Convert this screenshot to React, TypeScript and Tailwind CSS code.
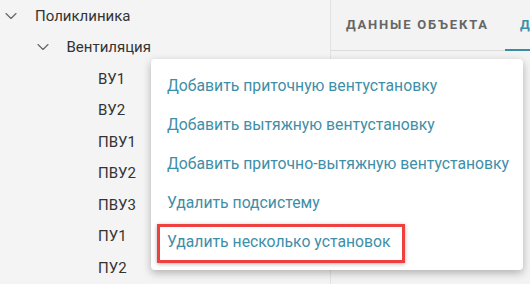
import { ChevronDown } from 'lucide-react';

const units = ['ВУ1', 'ВУ2', 'ПВУ1', 'ПВУ2', 'ПВУ3', 'ПУ1', 'ПУ2'];

const menuItems = [
  'Добавить приточную вентустановку',
  'Добавить вытяжную вентустановку',
  'Добавить приточно-вытяжную вентустановку',
  'Удалить подсистему',
  'Удалить несколько установок',
];

function TreeRow({ level, label, open }: { level: number; label: string; open?: boolean }) {
  return (
    <div className="flex items-center h-[31.5px]" style={{ paddingLeft: level * 31.5 + 1 }}>
      <div className="w-[20px] h-[20px] flex items-center justify-center mr-[14px]">
        {open && <ChevronDown size={20} strokeWidth={1.4} className="text-[#666]" />}
      </div>
      <span className="text-[15px] text-[#333] whitespace-nowrap">{label}</span>
    </div>
  );
}

export default function App() {
  return (
    <div className="relative w-[530px] h-[284px] overflow-hidden bg-[#f4f4f4] font-['Roboto',sans-serif]">
      <div className="flex h-full">
        <div className="w-[330px] shrink-0 h-full">
          <TreeRow level={0} label="Поликлиника" open />
          <TreeRow level={1} label="Вентиляция" open />
          {units.map((u) => (
            <TreeRow key={u} level={2} label={u} />
          ))}
        </div>
        <div className="flex-1 min-w-0 overflow-hidden h-full border-l border-[#e2e2e2] bg-[#f3f3f3]">
          <div className="h-[51px] flex border-b border-[#dcdcdc]">
            <div className="shrink-0 pl-[15px] pr-[16px] flex items-center text-[13px] font-bold tracking-[1.8px] text-[#666] whitespace-nowrap">
              ДАННЫЕ ОБЪЕКТА
            </div>
            <div className="shrink-0 pl-[15px] flex items-center text-[13px] font-bold tracking-[1.8px] text-[#3d8ea8] border-b-2 border-[#3a8ba6] whitespace-nowrap -mb-px">
              ДОКУМЕНТЫ
            </div>
          </div>
        </div>
      </div>

      <div className="absolute left-[151px] top-[59px] w-[372px] h-[211px] bg-white rounded-[4px] shadow-[0_3px_8px_rgba(0,0,0,0.28)] pt-[7.5px]">
        {menuItems.map((item) => (
          <div key={item} className="h-[39px] flex items-center pl-[16px] text-[15.75px] text-[#3d8ea8] whitespace-nowrap">
            {item}
          </div>
        ))}
        <div className="absolute left-[6px] top-[165px] w-[248px] h-[39px] border-[3px] border-[#ef4040] shadow-[0_1px_4px_rgba(0,0,0,0.3)]" />
      </div>
    </div>
  );
}
